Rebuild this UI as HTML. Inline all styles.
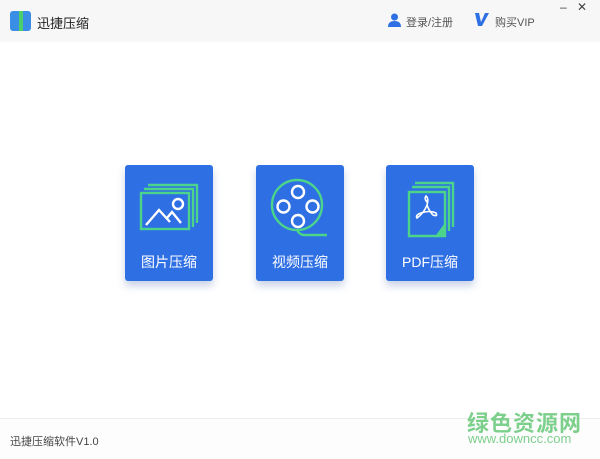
<html><head><style>
body{margin:0;width:600px;height:458px;background:#fff;font-family:"Liberation Sans","Noto Sans CJK SC",sans-serif;position:relative;overflow:hidden}
.hd{position:absolute;left:0;top:0;width:600px;height:42px;background:#f7f7f8}
.card{position:absolute;top:165px;width:88px;height:116px;background:#2f6fe4;border-radius:3px;box-shadow:0 5px 8px rgba(40,80,160,.25)}
.card span{position:absolute;left:0;right:0;top:87px;text-align:center;color:#fff;font-size:14px}
.ft{position:absolute;left:0;top:418px;width:600px;height:40px;border-top:1px solid #eee;background:#fdfdfd}
</style></head><body>
<div class="hd">
<div style="position:absolute;left:10px;top:11px;width:21px;height:20px;background:#3a8ee6;border-radius:3px"></div>
<div style="position:absolute;left:19px;top:11px;width:4px;height:20px;background:#4ccf6a"></div>
<div style="position:absolute;left:37px;top:13px;font-size:13px;color:#222">迅捷压缩</div>
<svg style="position:absolute;left:388px;top:13px" width="13" height="14"><circle cx="6.5" cy="4" r="3.5" fill="#2f6fe4"/><path d="M0 14 Q0 8 6.5 8 Q13 8 13 14Z" fill="#2f6fe4"/></svg>
<div style="position:absolute;left:406px;top:14px;font-size:11px;color:#555">登录/注册</div>
<svg style="position:absolute;left:475px;top:13px" width="14" height="13"><path d="M0 0 L4 0 L6 9 L10 0 L14 0 L7 13 L3 13Z" fill="#2f6fe4"/></svg>
<div style="position:absolute;left:495px;top:14px;font-size:11px;color:#555">购买VIP</div>
<div style="position:absolute;left:560px;top:0px;font-size:12px;color:#444">–</div>
<div style="position:absolute;left:577px;top:0px;font-size:12px;color:#444">✕</div>
</div>
<div class="card" style="left:125px">
<svg width="88" height="80" style="position:absolute;left:0;top:0" fill="none" stroke-width="2.4">
<path d="M23 20 H72 V58" stroke="#4bd48a"/><path d="M19 24 H68 V62" stroke="#4bd48a"/>
<rect x="16" y="28" width="48" height="36" stroke="#4bd48a"/>
<path d="M21 60 L34 45 L45 57 M42 53 L47 47 L56 58" stroke="#fff"/>
<circle cx="53" cy="39" r="5" stroke="#fff"/>
</svg><span>图片压缩</span></div>
<div class="card" style="left:256px">
<svg width="88" height="80" style="position:absolute;left:0;top:0" fill="none" stroke-width="2.4">
<circle cx="41" cy="40" r="25" stroke="#4bd48a"/><path d="M41 65 Q44 70 48 70 H71" stroke="#4bd48a"/>
<circle cx="42" cy="27" r="6" stroke="#fff"/><circle cx="42" cy="56" r="6" stroke="#fff"/>
<circle cx="27.5" cy="41.5" r="6" stroke="#fff"/><circle cx="56.5" cy="41.5" r="6" stroke="#fff"/>
</svg><span>视频压缩</span></div>
<div class="card" style="left:386px">
<svg width="88" height="80" style="position:absolute;left:0;top:0" fill="none" stroke-width="2.4">
<path d="M29 18 H67 V62" stroke="#4bd48a"/><path d="M26 22 H63 V66" stroke="#4bd48a"/>
<path d="M23 27 H59 V60 L51 71 H23Z" stroke="#4bd48a"/><path d="M59 60 L51 71 L59 71Z" fill="#4bd48a" stroke="#4bd48a"/>
<path d="M41 37 Q38 34 40 31 Q43 33 41 40 Q38 48 31 53 Q29 50 35 48 Q44 45 50 48 Q52 52 47 50 Q43 46 41 40" stroke="#fff" stroke-width="1.6"/>
</svg><span>PDF压缩</span></div>
<div class="ft">
<div style="position:absolute;left:10px;top:14px;font-size:11px;color:#444">迅捷压缩软件V1.0</div>
<div style="position:absolute;left:467px;top:-13px;font-size:22px;font-weight:bold;color:#7dcf8c;letter-spacing:1px">绿色资源网</div>
<div style="position:absolute;left:468px;top:12px;font-size:13px;color:#7dcf8c">www.downcc.com</div>
</div>
</body></html>
